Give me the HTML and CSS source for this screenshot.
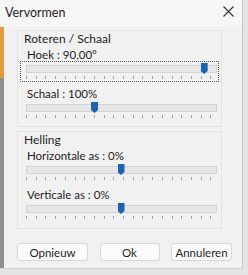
FILE: index.html
```html
<!DOCTYPE html>
<html lang="nl">
<head>
    <meta charset="UTF-8">
    <title>Vervormen</title>
    <link rel="stylesheet" href="styles.css">
</head>
<body>
    <div class="window">
        <div class="titlebar">
            <span class="title">Vervormen</span>
            <svg class="close" width="11" height="11" viewBox="0 0 11 11">
                <path d="M0.5 0.5 L10.5 10.5 M10.5 0.5 L0.5 10.5" stroke="#333" stroke-width="1.1" fill="none"/>
            </svg>
        </div>
        <div class="content">
            <div class="group">
                <div class="legend">Roteren / Schaal</div>
                <div class="field">
                    <div class="label">Hoek : 90,00°</div>
                    <div class="slider focus">
                        <div class="track"><span class="thumb" style="left: 94%"></span></div>
                        <div class="ticks"></div>
                    </div>
                </div>
                <div class="field">
                    <div class="label">Schaal : 100%</div>
                    <div class="slider">
                        <div class="track"><span class="thumb" style="left: 36%"></span></div>
                        <div class="ticks"></div>
                    </div>
                </div>
            </div>
            <div class="group">
                <div class="legend">Helling</div>
                <div class="field">
                    <div class="label">Horizontale as : 0%</div>
                    <div class="slider">
                        <div class="track"><span class="thumb" style="left: 50%"></span></div>
                        <div class="ticks"></div>
                    </div>
                </div>
                <div class="field">
                    <div class="label">Verticale as : 0%</div>
                    <div class="slider">
                        <div class="track"><span class="thumb" style="left: 50%"></span></div>
                        <div class="ticks"></div>
                    </div>
                </div>
            </div>
            <div class="buttons">
                <button class="btn btn-reset">Opnieuw</button>
                <button class="btn btn-ok">Ok</button>
                <button class="btn btn-cancel">Annuleren</button>
            </div>
        </div>
    </div>
</body>
</html>
```

FILE: styles.css
```css
html, body {
    margin: 0;
    padding: 0;
    background: #e4e4e4;
}
body {
    font-family: Lato, "Open Sans", sans-serif;
    font-size: 11.5px;
    color: #1e1e1e;
}
.window {
    width: 242px;
    height: 268px;
    background: #f1f1f1;
    border-right: 1px solid #c8c8c8;
    border-bottom: 1px solid #d0d0d0;
    display: flex;
    flex-direction: column;
}
.titlebar {
    height: 27px;
    display: flex;
    align-items: center;
    justify-content: space-between;
    padding: 0 8px 0 5px;
    background: #f6f6f6;
}
.title {
    font-size: 12.5px;
    margin-top: -3px;
}
.close {
    margin-top: -4px;
}
.content {
    flex: 1;
    padding: 3px 20px 0 13px;
    border-left: 4px solid;
    border-image: linear-gradient(to bottom, #e59a3a 0 52px, #8f8f8f 52px) 1;
}
.group {
    border: 1px solid #e2e2e2;
    padding: 0 2px 5px 2px;
    margin-bottom: 4px;
}
.group + .group {
    padding-bottom: 6px;
    margin-bottom: 0;
}
.legend {
    height: 15px;
    line-height: 16px;
    padding-left: 4px;
    font-size: 12px;
}
.field {
    margin-top: 1px;
}
.field + .field {
    margin-top: 4px;
}
.group + .group .field:first-of-type {
    margin-top: 2px;
}
.label {
    height: 14px;
    line-height: 16px;
    padding-left: 7px;
}
.slider {
    height: 21px;
    padding: 3px 0 0 5px;
    box-sizing: border-box;
    border: 1px dotted transparent;
}
.slider.focus {
    border-color: #555;
}
.track {
    position: relative;
    height: 6px;
    background: #e6e6e6;
    border: 1px solid #d2d2d2;
    margin-right: 1px;
}
.thumb {
    position: absolute;
    top: -3px;
    width: 7px;
    height: 11px;
    margin-left: -4px;
    background: #1a62b8;
    clip-path: polygon(0 0, 100% 0, 100% 72%, 50% 100%, 0 72%);
}
.ticks {
    height: 3px;
    margin-top: 3px;
    margin-right: 1px;
    background: repeating-linear-gradient(to right, #a0a0a0 0 1px, transparent 1px 9.7px);
}
.buttons {
    display: flex;
    justify-content: space-between;
    padding: 14px 0 0 0;
    margin-right: -10px;
}
.btn {
    height: 18px;
    padding: 0;
    font-family: inherit;
    font-size: 11.5px;
    color: #1e1e1e;
    background: #fbfbfb;
    border: 1px solid #d6d6d6;
    border-radius: 3px;
}
.btn-reset {
    width: 71px;
}
.btn-ok {
    width: 60px;
}
.btn-cancel {
    width: 61px;
}
```
